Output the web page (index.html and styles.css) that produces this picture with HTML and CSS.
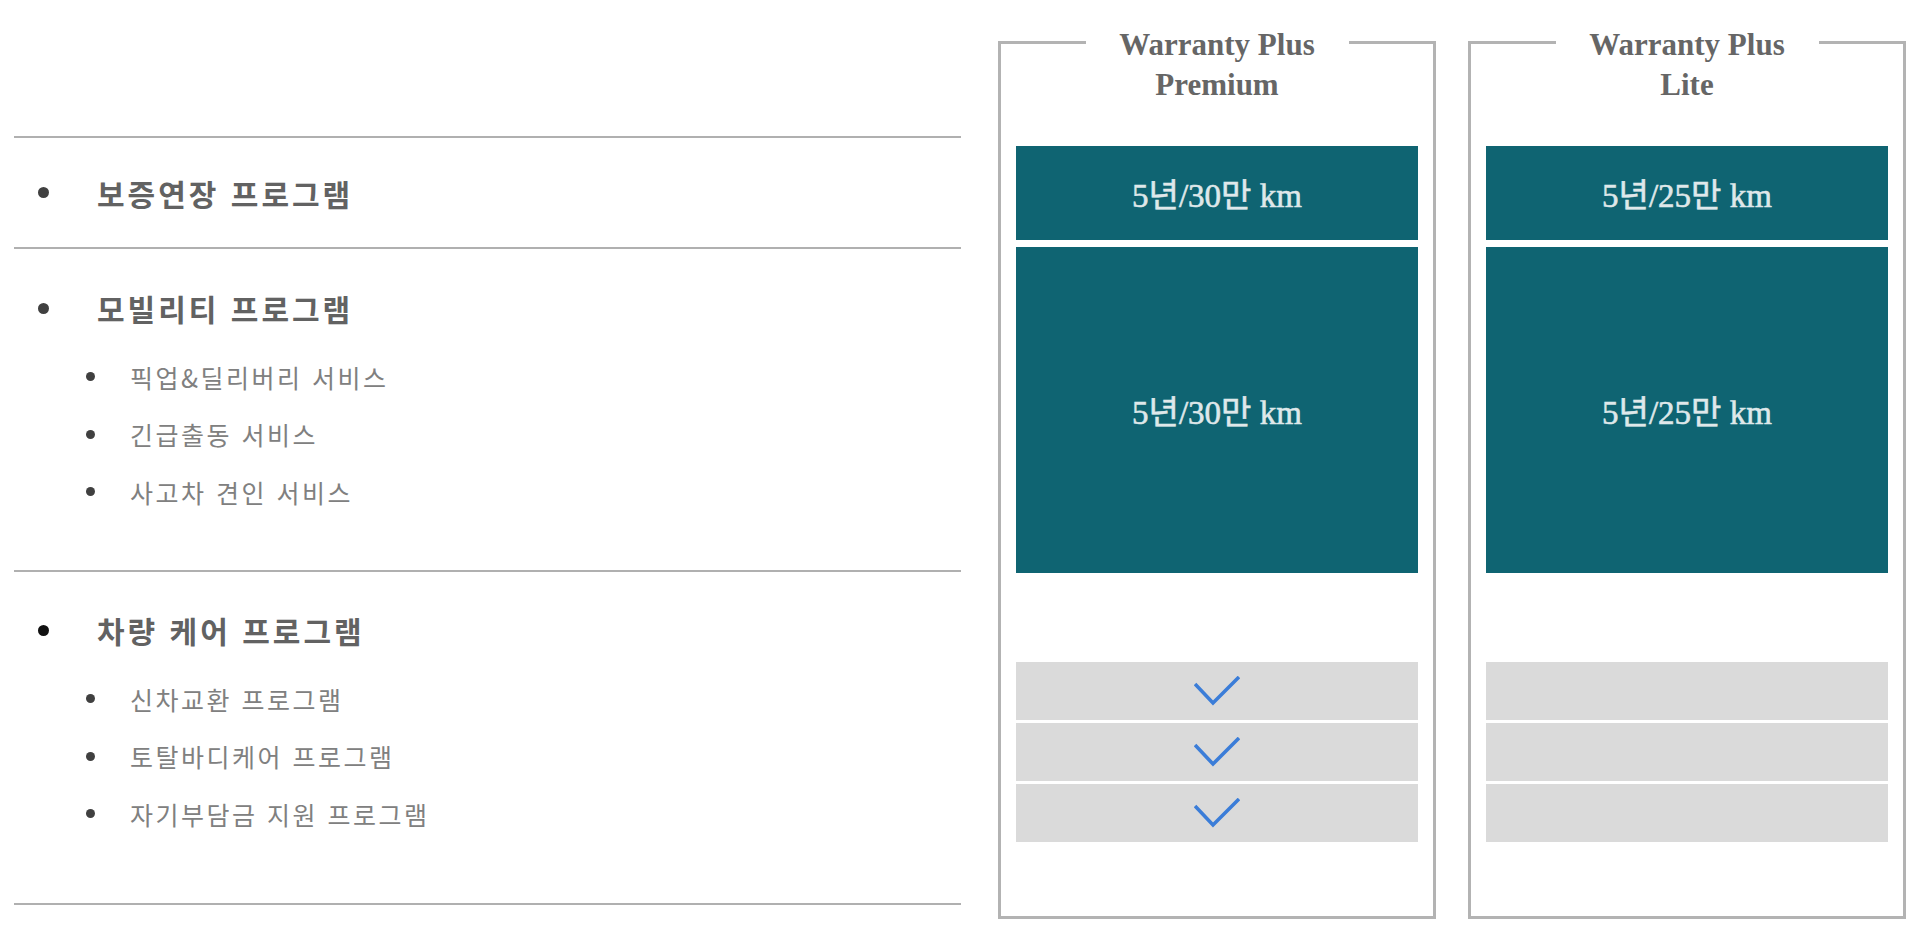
FILE: index.html
```html
<!DOCTYPE html>
<html lang="ko">
<head>
<meta charset="utf-8">
<title>Warranty Plus</title>
<link rel="stylesheet" href="styles.css">
</head>
<body>
<div class="page">
  <div class="left">
    <section class="grp grp1">
      <div class="head"><span class="dot"></span><span>보증연장 프로그램</span></div>
    </section>
    <section class="grp grp2">
      <div class="head"><span class="dot"></span><span>모빌리티 프로그램</span></div>
      <ul class="subs">
        <li><span class="sdot"></span>픽업&amp;딜리버리 서비스</li>
        <li><span class="sdot"></span>긴급출동 서비스</li>
        <li><span class="sdot"></span>사고차 견인 서비스</li>
      </ul>
    </section>
    <section class="grp grp3">
      <div class="head"><span class="dot dark"></span><span>차량 케어 프로그램</span></div>
      <ul class="subs">
        <li><span class="sdot"></span>신차교환 프로그램</li>
        <li><span class="sdot"></span>토탈바디케어 프로그램</li>
        <li><span class="sdot"></span>자기부담금 지원 프로그램</li>
      </ul>
    </section>
  </div>
  <div class="cards">
    <div class="card">
      <div class="title">Warranty Plus<br>Premium</div>
      <div class="teal t1">5년/30만 km</div>
      <div class="teal t2">5년/30만 km</div>
      <div class="rows">
        <div class="row"><svg class="chk" viewBox="0 0 46 30" width="46" height="30"><polyline points="1,8 19,27 45,1" fill="none" stroke="#3b7dd8" stroke-width="3.6"/></svg></div>
        <div class="row"><svg class="chk" viewBox="0 0 46 30" width="46" height="30"><polyline points="1,8 19,27 45,1" fill="none" stroke="#3b7dd8" stroke-width="3.6"/></svg></div>
        <div class="row"><svg class="chk" viewBox="0 0 46 30" width="46" height="30"><polyline points="1,8 19,27 45,1" fill="none" stroke="#3b7dd8" stroke-width="3.6"/></svg></div>
      </div>
    </div>
    <div class="card">
      <div class="title">Warranty Plus<br>Lite</div>
      <div class="teal t1">5년/25만 km</div>
      <div class="teal t2">5년/25만 km</div>
      <div class="rows">
        <div class="row"></div>
        <div class="row"></div>
        <div class="row"></div>
      </div>
    </div>
  </div>
</div>
</body>
</html>
```
FILE: styles.css
```css
* { box-sizing: border-box; }
html, body { margin: 0; padding: 0; background: #fff; }
body { font-family: "Noto Sans CJK KR", "Noto Sans", sans-serif; }

.page {
  display: flex;
  width: 1920px;
  height: 941px;
  overflow: hidden;
}

.left {
  margin-left: 14px;
  width: 947px;
  padding-top: 136px;
  display: flex;
  flex-direction: column;
}

.grp {
  border-top: 2px solid #b0b0b0;
}
.grp1 {
  height: 111px;
  display: flex;
  align-items: center;
}
.grp2 { height: 323px; padding-top: 39px; }
.grp3 { height: 335px; padding-top: 38px; border-bottom: 2px solid #b0b0b0; }

.head {
  display: flex;
  align-items: center;
  height: 40px;
  font-size: 30px;
  letter-spacing: 3px;
  font-weight: 700;
  color: #626262;
}
.dot {
  width: 11px;
  height: 11px;
  border-radius: 50%;
  background: #404040;
  margin-left: 24px;
  margin-right: 48px;
  flex: none;
}
.dot.dark { background: #111; }

.subs {
  list-style: none;
  margin: 20px 0 0 0;
  padding: 0 0 0 72px;
}
.subs li {
  display: flex;
  align-items: center;
  height: 57.5px;
  font-size: 25px;
  letter-spacing: 2.5px;
  color: #808080;
}
.sdot {
  width: 9px;
  height: 9px;
  border-radius: 50%;
  background: #404040;
  margin-right: 35px;
  flex: none;
}

.cards {
  display: flex;
  gap: 32px;
  margin-left: 37px;
  padding-top: 41px;
}
.card {
  width: 438px;
  height: 878px;
  border: 3px solid #b3b3b3;
  padding: 0 15px;
  display: flex;
  flex-direction: column;
}
.title {
  width: 263px;
  margin: -19px auto 0;
  background: #fff;
  text-align: center;
  font-family: "Liberation Serif", "Noto Sans CJK KR", serif;
  font-weight: 700;
  font-size: 31px;
  line-height: 40px;
  color: #666;
}
.teal {
  background: #0f6472;
  color: #dfe8ea;
  display: flex;
  align-items: center;
  justify-content: center;
  font-family: "Liberation Serif", "Noto Sans CJK KR", serif;
  font-size: 33px;
  font-weight: 400;
  -webkit-text-stroke: 0.6px #dfe8ea;
}
.t1 { height: 94px; margin-top: 41px; }
.t2 { height: 326px; margin-top: 7px; }

.rows {
  margin-top: 89px;
  display: flex;
  flex-direction: column;
  gap: 3px;
}
.row {
  height: 58px;
  background: #dadada;
  display: flex;
  align-items: center;
  justify-content: center;
}
.chk { display: block; }
```
